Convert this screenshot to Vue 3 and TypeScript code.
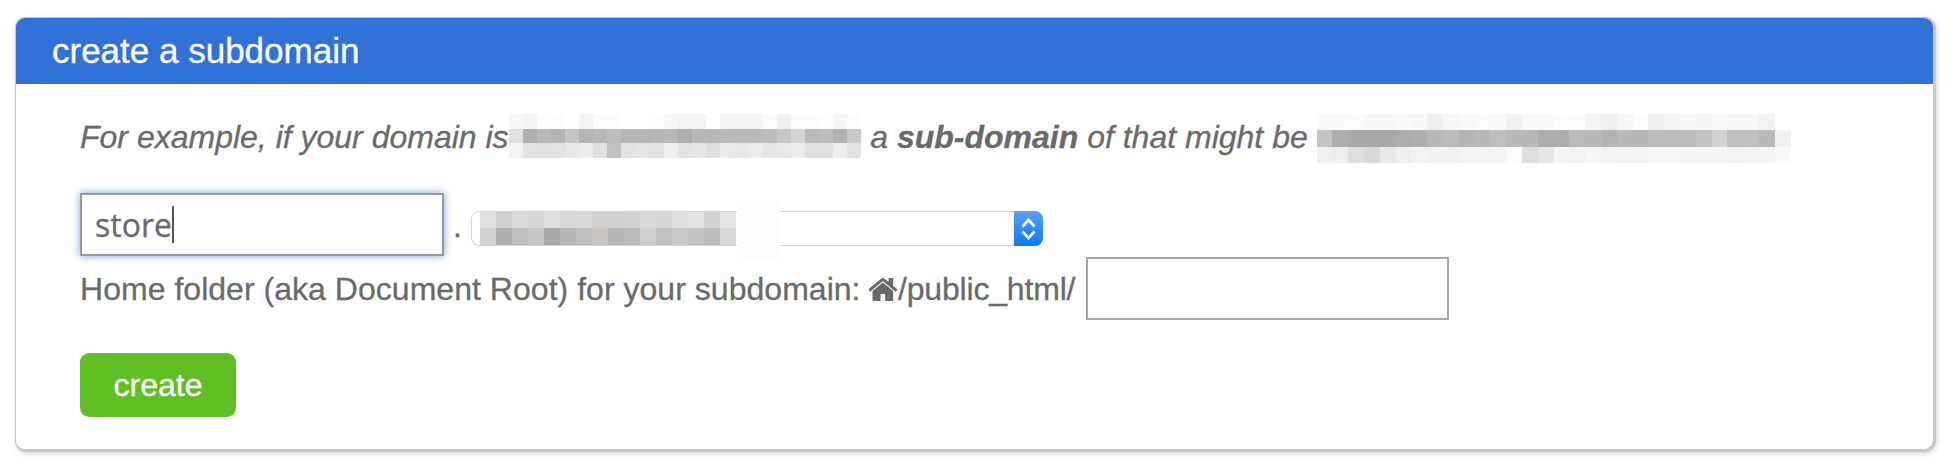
<script setup lang="ts">
const toRows = (rows: string[]): string[][] => rows.map((r) => r.split(' ').map((c) => '#' + c))

const domainBlur = toRows([
  'f7f7f7 f3f3f3 fdfdfd fbfcfb ffffff f3f3f3 fbfbfb fbfbfb ffffff ffffff fcfcfc f6f6f6 f3f3f3 f3f3f3 ffffff f5f5f5 f5f5f5 f5f5f5 fbfbfb eff1f0 fbfbfb fbfbfb fdfdfd f7f7f7 fcfcfc',
  'e0e0e0 aeaeae b9b9b9 b3b5b5 c4c4c4 b4b4b4 b8b8b8 bdbdbd b5b5b5 b5b5b5 b8b8b8 b7b7b7 aeaeae b8b8b8 b6b6b6 b8b8b8 bababa bababa bcbcbc c6c6c6 d4d4d4 b9b9b9 bdbdbd b1b1b1 c9c9c9',
  'f3f3f3 e3e3e3 e1e1e1 e3e3e3 e8e8e8 ebedec e0e0e0 c0c0c0 e3e3e3 e5e5e5 e3e3e3 eeeeee e3e3e3 e5e5e5 dedede eaeaea e8e8e8 ebebeb e5e5e5 e8e8e8 ececec e0e0e0 e0e0e0 ededed e3e3e3',
])
const subBlur = toRows([
  'fafafa fafafa fbfbfb f8f8f8 f8f8f8 fafafb f8f8f8 eeeff0 f6f6f6 f9f9f9 fbfbfb fafafa f1f1f1 f8f9fa f9f9fa fcfcfc fbfbfc f3f3f4 eeeff0 f5f6f5 fbfcfb eeeff0 f4f5f4 f6f7f6 f3f3f3 f9fafb f8f8f8 f8f8f8 f2f2f4 ffffff',
  'c4c4c4 adadad aaa8a9 a8a8a8 a8a8a8 acacac aeaeae b8b8b8 babcbc b4b4b4 b8b8b8 bdbfbf b8b8b8 b8b8b8 adadad adadad b9bbbb b8b8b8 b3b3b3 b9b9b9 b5b5b5 bcbcbc bcbcbc bcbcbc c2c2c4 d2d2d2 bfbfbf bfbfbf b9b9b9 eff0f0',
  'f0f0f0 eeeeee dedede d8d8d8 e8e8e8 eeeeee f3f3f3 f0f1f0 f1f1f1 f3f3f3 f3f3f3 f4f4f4 fafbfa dedede e5e7e6 f5f5f5 f2f2f2 f7f7f7 f3f3f3 f2f2f2 f1f2f1 f7f7f7 f6f6f6 f5f5f5 f5f5f5 f4f4f4 f2f2f2 f3f3f3 f5f5f5 f9f9f9',
])
const selectBlur = toRows([
  'e2dfe0 cfcfcf dcdcdc d6d6d6 dfdfdf d8d8d8 d9d9d9 d0d0d0 d0d0d0 d2d2d2 d8d8d8 d6d6d6 dedede e2e2e2 d2d2d2 e4e4e4',
  'd4d2d3 aeaeae bcbebf c4c6c7 aaa7a9 b5b7b8 bdbfc0 c8c5c2 b6b7b8 bbbbbb cecece c2c0be c9c9c9 c2c2c2 bcbcbc d8d8d8',
])
</script>

<template>
  <div class="page">
    <section class="card">
      <header class="card-head">create a subdomain</header>
      <div class="card-body">
        <p class="intro">For example, if your domain is<span class="blur blur-domain"><span v-for="(row, r) in domainBlur" :key="r" class="blur-row"><span v-for="(c, i) in row" :key="i" class="cell" :style="{ background: c }"></span></span></span> a <b>sub-domain</b> of that might be <span class="blur blur-sub"><span v-for="(row, r) in subBlur" :key="r" class="blur-row"><span v-for="(c, i) in row" :key="i" class="cell" :style="{ background: c }"></span></span></span></p>

        <div class="row-domain">
          <div class="name-input">store<span class="caret"></span></div>
          <span class="dot"> . </span>
          <div class="select">
            <div class="select-blur">
              <div v-for="(row, r) in selectBlur" :key="r" class="blur-row">
                <span v-for="(c, i) in row" :key="i" class="cell" :style="{ background: c }"></span>
              </div>
            </div>
            <div class="select-patch"></div>
            <div class="stepper">
              <svg viewBox="0 0 29 34" width="29" height="35" fill="none" stroke="#fff" stroke-width="2.6">
                <path d="M8.500 15 14.500 8.500 20.500 15" />
                <path d="M8.500 20 14.500 26.500 20.500 20" />
              </svg>
            </div>
          </div>
        </div>

        <div class="row-home">
          <span class="home-label"><span class="home-lead">Home folder (aka Document Root) for your subdomain: </span><svg class="home-icon" viewBox="64 256 1664 1280" width="30" height="23" fill="#696969"><path d="M1408 992v480q0 26-19 45t-45 19h-384v-384h-256v384h-384q-26 0-45-19t-19-45v-480q0-1 .5-3t.5-3l575-474 575 474q1 2 1 6zm223-69l-62 74q-8 9-21 11h-3q-13 0-21-7l-692-577-692 577q-12 8-24 7-13-2-21-11l-62-74q-8-10-7-23.500t11-21.500l719-599q32-26 76-26t76 26l244 204v-195q0-14 9-23t23-9h192q14 0 23 9t9 23v408l219 182q10 8 11 21.500t-7 23.500z" /></svg><span class="home-path">/public_html/</span></span>
          <input class="folder-input" type="text" />
        </div>

        <button class="create" type="button">create</button>
      </div>
    </section>
  </div>
</template>

<style>
html,
body {
  background: #fff;
}
</style>

<style scoped>
.page {
  height: 472px;
  overflow: hidden;
  padding: 17px 0 0 15px;
  box-sizing: border-box;
  font-family: "Liberation Sans", Arial, sans-serif;
  color: #6a6a6a;
  -webkit-text-stroke: 0.3px currentColor;
}
.card {
  width: 1919px;
  box-sizing: border-box;
  background: #fff;
  border: 1px solid #c6c6c6;
  border-radius: 10px;
  box-shadow: 1px 1px 0 1px #c9c9c9, 2px 3px 6px rgba(0, 0, 0, 0.2);
}
.card-head {
  height: 66px;
  line-height: 66px;
  padding-left: 36px;
  background: #3272d8;
  color: #fff;
  font-size: 35px;
  border-radius: 9px 9px 0 0;
}
.card-body {
  padding: 30px 0 32px 64px;
}
.intro {
  margin: 0;
  height: 49px;
  font-size: 32px;
  line-height: 44px;
  font-style: italic;
  white-space: nowrap;
}
.blur {
  display: inline-block;
}
.blur-row {
  display: flex;
}
.cell {
  display: block;
  flex: none;
}
.blur-domain {
  vertical-align: -10px;
}
.blur-domain .blur-row {
  height: 14.660px;
}
.blur-domain .cell {
  width: 14.120px;
}
.blur-sub {
  vertical-align: -15px;
}
.blur-sub .blur-row {
  height: 16.300px;
}
.blur-sub .cell {
  width: 15.800px;
}
.row-domain {
  display: flex;
  align-items: flex-start;
  margin-top: 30px;
}
.name-input {
  position: relative;
  width: 364px;
  height: 63px;
  box-sizing: border-box;
  border: 2px solid #9299a6;
  box-shadow: 0 0 8px rgba(60, 110, 185, 0.65);
  padding-left: 13px;
  background: #fff;
  font-family: "Open Sans", sans-serif;
  font-size: 32px;
  line-height: 60px;
  display: flex;
}
.caret {
  display: block;
  width: 2px;
  height: 37px;
  margin: 11px 0 0 0;
  background: #555;
}
.dot {
  margin-top: 11px;
  font-size: 32px;
  line-height: 44px;
  white-space: pre;
}
.select {
  position: relative;
  width: 572px;
  height: 35px;
  margin-top: 18px;
  box-sizing: border-box;
  border: 1.500px solid #d2d2d2;
  border-radius: 8px;
  background: #fff;
}
.select-blur {
  position: absolute;
  left: 8px;
  top: 0;
}
.select-blur .blur-row {
  height: 16.300px;
}
.select-blur .cell {
  width: 16.060px;
}
.select-patch {
  position: absolute;
  left: 265px;
  top: -12px;
  width: 43px;
  height: 61px;
  background: #fdfdfd;
}
.stepper {
  position: absolute;
  right: -1.500px;
  top: -1.500px;
  width: 29px;
  height: 35px;
  border-radius: 0 8px 8px 0;
  background: linear-gradient(#5ba0f8, #0a78fa);
}
.stepper svg {
  display: block;
}
.row-home {
  display: flex;
  align-items: flex-start;
  margin-top: 1px;
}
.home-label {
  margin-top: 10px;
  font-size: 32px;
  line-height: 44px;
  white-space: nowrap;
}
.home-lead {
  letter-spacing: 0.030px;
}
.home-icon {
  vertical-align: -1px;
  margin-right: -1.500px;
}
.home-path {
  letter-spacing: -0.180px;
}
.folder-input {
  display: block;
  width: 363px;
  height: 63px;
  box-sizing: border-box;
  margin: 0 0 0 11px;
  padding: 0;
  border: 2px solid #a6a6a9;
  border-radius: 0;
  background: #fff;
  outline: none;
}
.create {
  display: block;
  width: 156px;
  height: 64px;
  margin-top: 33px;
  padding: 0;
  border: 0;
  border-radius: 9px;
  background: #5fbf24;
  color: #fff;
  font-family: "Liberation Sans", Arial, sans-serif;
  font-size: 32px;
  -webkit-text-stroke: 0.3px currentColor;
}
</style>
